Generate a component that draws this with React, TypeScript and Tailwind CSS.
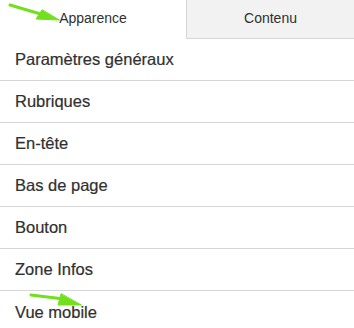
import React from "react";

const items = [
  "Paramètres généraux",
  "Rubriques",
  "En-tête",
  "Bas de page",
  "Bouton",
  "Zone Infos",
  "Vue mobile",
];

export default function App() {
  return (
    <div
      className="relative w-[354px] h-[328px] overflow-hidden bg-white text-[#303030]"
      style={{ fontFamily: '"Liberation Sans", Arial, sans-serif' }}
    >
      <div className="flex h-[39px]">
        <div className="w-[186px] flex items-center justify-center text-[14px] pb-[2px]">
          Apparence
        </div>
        <div className="flex-1 flex items-center justify-center text-[14px] pb-[2px] bg-[#f2f2f2] border-l border-b border-[#d6d6d6]">
          Contenu
        </div>
      </div>
      <div className="flex flex-col">
        {items.map((it, i) => (
          <div
            key={it}
            className={`h-[42px] flex items-center pl-[15px] text-[16.5px] [-webkit-text-stroke:0.2px_#303030] ${
              i < items.length - 1 ? "border-b border-[#d6d6d6]" : ""
            }`}
          >
            {it}
          </div>
        ))}
      </div>
      <svg
        className="absolute left-0 top-0 pointer-events-none"
        width="354"
        height="328"
        viewBox="0 0 354 328"
      >
        <g fill="#72e11d" stroke="#72e11d" strokeLinecap="round">
          <line x1="10" y1="5" x2="44" y2="15" strokeWidth="3" />
          <polygon points="59,20 36,19 42,10" strokeWidth="1" strokeLinejoin="round" />
          <line x1="31" y1="295" x2="64" y2="299" strokeWidth="3" />
          <polygon points="81,305 58,305 61,294" strokeWidth="1" strokeLinejoin="round" />
        </g>
      </svg>
    </div>
  );
}
